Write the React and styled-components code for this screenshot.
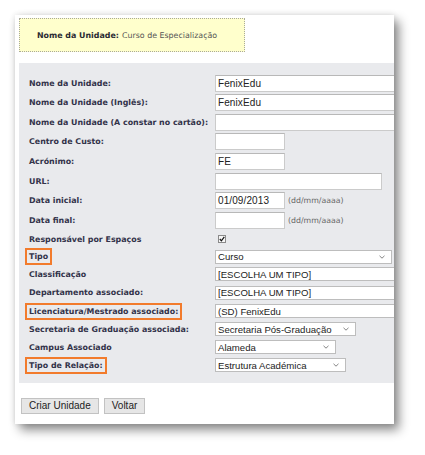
import React from "react";
import styled, { createGlobalStyle } from "styled-components";

const GlobalStyle = createGlobalStyle`
  html, body { margin: 0; padding: 0; background: #ffffff; }
  body { font-family: "DejaVu Sans", Verdana, sans-serif; }
`;

const Page = styled.div`
  padding: 15px 0 0 15px;
  width: 425px;
  height: 455px;
  box-sizing: border-box;
  overflow: hidden;
`;

const Card = styled.div`
  width: 379px;
  height: 409px;
  background: #ffffff;
  overflow: hidden;
  box-sizing: border-box;
  padding: 3px 0 0 4px;
  box-shadow: 5px 6px 10px rgba(0, 0, 0, 0.45), 0 0 6px rgba(0, 0, 0, 0.12);
`;

const Notice = styled.div`
  width: 226px;
  height: 34px;
  box-sizing: border-box;
  border: 1px dotted #a9a99a;
  background: #ffffcc;
  display: flex;
  align-items: center;
  padding-left: 17px;
  font-size: 7.9px;
  color: #555;
  gap: 3px;
`;

const NoticeKey = styled.b`
  color: #2b2b33;
`;

const Panel = styled.div`
  margin-top: 11px;
  width: 420px;
  background: #e9eaed;
  padding: 10px 0 9px 10px;
  box-sizing: border-box;
`;

const Row = styled.div`
  display: grid;
  grid-template-columns: 186px 1fr;
  align-items: center;
  height: ${(p) => p.$h}px;
`;

const Label = styled.span`
  font-weight: bold;
  font-size: 7.9px;
  color: #33334a;
  white-space: nowrap;
  line-height: 11px;
`;

const Highlight = styled.span`
  display: inline-block;
  border: 2px solid #f27b2c;
  padding: 1px 2px 1px 2px;
  margin: -3px -4px;
`;

const Control = styled.div`
  display: flex;
  align-items: center;
  gap: 2px;
`;

const TextInput = styled.div`
  width: ${(p) => p.$w}px;
  height: 17px;
  box-sizing: border-box;
  border: 1px solid #cbcbcb;
  border-top-color: #b8b8b8;
  background: #ffffff;
  font-family: "Liberation Sans", Arial, sans-serif;
  font-size: 10px;
  color: #222;
  padding-left: 2px;
  display: flex;
  align-items: center;
  white-space: nowrap;
  letter-spacing: 0.1px;
`;

const Hint = styled.span`
  font-size: 7.8px;
  color: #666;
  margin-left: 1px;
`;

const Check = styled.div`
  width: 8px;
  height: 8px;
  margin-left: 3px;
  box-sizing: border-box;
  border: 1px solid #8a8a8a;
  background: #f6f6f6;
  display: flex;
  align-items: center;
  justify-content: center;
`;

const Select = styled.div`
  width: ${(p) => p.$w}px;
  height: 14px;
  box-sizing: border-box;
  border: 1px solid #bdbdbd;
  background: #ffffff;
  font-family: "Liberation Sans", Arial, sans-serif;
  font-size: 9.6px;
  color: #222;
  padding: 0 6px 0 2px;
  display: flex;
  align-items: center;
  justify-content: space-between;
  white-space: nowrap;
`;

const ButtonBar = styled.div`
  display: flex;
  gap: 5px;
  margin: 15px 0 0 2px;
`;

const Button = styled.button`
  height: 16px;
  box-sizing: border-box;
  border: 1px solid #c2c2c2;
  background: #e6e6e6;
  font-family: "Liberation Sans", Arial, sans-serif;
  font-size: 10px;
  color: #222;
  padding: 0 7px;
  margin: 0;
  line-height: 14px;
`;

const Chevron = () => (
  <svg width="6" height="4" viewBox="0 0 6 4">
    <path d="M0.5 0.8 L3 3.2 L5.5 0.8" fill="none" stroke="#777" strokeWidth="0.9" />
  </svg>
);

const CheckMark = () => (
  <svg width="6" height="6" viewBox="0 0 6 6">
    <path d="M0.8 3 L2.4 4.8 L5.3 0.9" fill="none" stroke="#111" strokeWidth="1.2" />
  </svg>
);

export default function App() {
  return (
    <>
      <GlobalStyle />
      <Page>
        <Card>
          <Notice>
            <NoticeKey>Nome da Unidade:</NoticeKey>
            <span>Curso de Especialização</span>
          </Notice>
          <Panel>
            <Row $h={20}>
              <Label>Nome da Unidade:</Label>
              <Control><TextInput $w={220}>FenixEdu</TextInput></Control>
            </Row>
            <Row $h={19}>
              <Label>Nome da Unidade (Inglês):</Label>
              <Control><TextInput $w={220}>FenixEdu</TextInput></Control>
            </Row>
            <Row $h={20}>
              <Label>Nome da Unidade (A constar no cartão):</Label>
              <Control><TextInput $w={220} /></Control>
            </Row>
            <Row $h={19}>
              <Label>Centro de Custo:</Label>
              <Control><TextInput $w={70} /></Control>
            </Row>
            <Row $h={20}>
              <Label>Acrónimo:</Label>
              <Control><TextInput $w={70}>FE</TextInput></Control>
            </Row>
            <Row $h={20}>
              <Label>URL:</Label>
              <Control><TextInput $w={167} /></Control>
            </Row>
            <Row $h={19}>
              <Label>Data inicial:</Label>
              <Control>
                <TextInput $w={70}>01/09/2013</TextInput>
                <Hint>(dd/mm/aaaa)</Hint>
              </Control>
            </Row>
            <Row $h={20}>
              <Label>Data final:</Label>
              <Control>
                <TextInput $w={70} />
                <Hint>(dd/mm/aaaa)</Hint>
              </Control>
            </Row>
            <Row $h={18}>
              <Label>Responsável por Espaços</Label>
              <Control><Check><CheckMark /></Check></Control>
            </Row>
            <Row $h={17}>
              <Label><Highlight>Tipo</Highlight></Label>
              <Control><Select $w={177}><span>Curso</span><Chevron /></Select></Control>
            </Row>
            <Row $h={18}>
              <Label>Classificação</Label>
              <Control><Select $w={220}><span>[ESCOLHA UM TIPO]</span></Select></Control>
            </Row>
            <Row $h={19}>
              <Label>Departamento associado:</Label>
              <Control><Select $w={220}><span>[ESCOLHA UM TIPO]</span></Select></Control>
            </Row>
            <Row $h={18}>
              <Label><Highlight>Licenciatura/Mestrado associado:</Highlight></Label>
              <Control><Select $w={220}><span>(SD) FenixEdu</span></Select></Control>
            </Row>
            <Row $h={18}>
              <Label>Secretaria de Graduação associada:</Label>
              <Control><Select $w={141}><span>Secretaria Pós-Graduação</span><Chevron /></Select></Control>
            </Row>
            <Row $h={18}>
              <Label>Campus Associado</Label>
              <Control><Select $w={121}><span>Alameda</span><Chevron /></Select></Control>
            </Row>
            <Row $h={18}>
              <Label><Highlight>Tipo de Relação:</Highlight></Label>
              <Control><Select $w={131}><span>Estrutura Académica</span><Chevron /></Select></Control>
            </Row>
          </Panel>
          <ButtonBar>
            <Button type="button">Criar Unidade</Button>
            <Button type="button">Voltar</Button>
          </ButtonBar>
        </Card>
      </Page>
    </>
  );
}
